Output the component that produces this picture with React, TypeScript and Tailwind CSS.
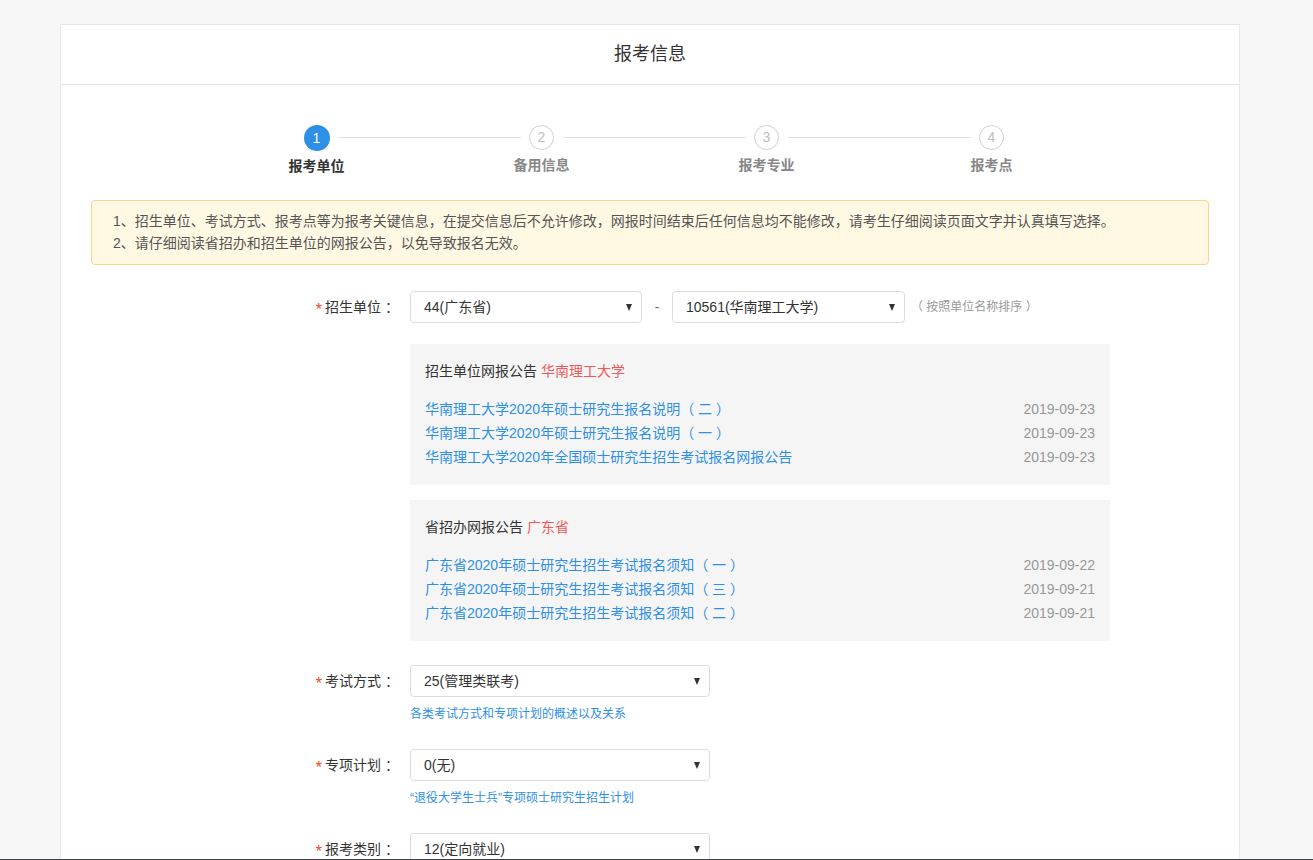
import React from "react";

const font = { fontFamily: '"Liberation Sans", "Noto Sans CJK SC", sans-serif' };

const steps = ["报考单位", "备用信息", "报考专业", "报考点"];

const unitNotices = [
  { title: "华南理工大学2020年硕士研究生报名说明（ 二 ）", date: "2019-09-23" },
  { title: "华南理工大学2020年硕士研究生报名说明（ 一 ）", date: "2019-09-23" },
  { title: "华南理工大学2020年全国硕士研究生招生考试报名网报公告", date: "2019-09-23" },
];

const provNotices = [
  { title: "广东省2020年硕士研究生招生考试报名须知（ 一 ）", date: "2019-09-22" },
  { title: "广东省2020年硕士研究生招生考试报名须知（ 三 ）", date: "2019-09-21" },
  { title: "广东省2020年硕士研究生招生考试报名须知（ 二 ）", date: "2019-09-21" },
];

// 仿下拉框（固定展示）
const FakeSelect = ({ value, width }: { value: string; width: string }) => (
  <div
    className={`${width} h-[32px] shrink-0 border border-[#dcdcdc] rounded-[4px] bg-white flex items-center justify-between pl-[13px] pr-[9px] text-[14px] text-[#333]`}
  >
    <span>{value}</span>
    <span className="w-0 h-0 border-l-[3.5px] border-r-[3.5px] border-t-[7px] border-l-transparent border-r-transparent border-t-[#333]"></span>
  </div>
);

const Label = ({ text }: { text: string }) => (
  <div className="w-[338px] shrink-0 flex justify-end items-center text-[14px] text-[#333]">
    <span className="text-[#f0502c] mr-[3px] text-[17px] leading-none pt-[5px]">*</span>
    <span>{text} ：</span>
  </div>
);

const NoticeBox = ({
  heading,
  name,
  items,
}: {
  heading: string;
  name: string;
  items: { title: string; date: string }[];
}) => (
  <div className="w-[700px] bg-[#f5f5f5] px-[15px] pt-[15px] pb-[16px] text-[14px]">
    <div className="h-[24px] leading-[24px] text-[#333]">
      {heading} <span className="text-[#f05a5a]">{name}</span>
    </div>
    <div className="mt-[14px]">
      {items.map((n) => (
        <div key={n.title} className="h-[24px] leading-[24px] flex justify-between">
          <span className="text-[#2d8fe8]">{n.title}</span>
          <span className="text-[#999]">{n.date}</span>
        </div>
      ))}
    </div>
  </div>
);

export default function App() {
  return (
    <div className="min-h-screen bg-[#f7f7f7] pt-[24px]" style={font}>
      <div className="ml-[60px] w-[1180px] bg-white border border-[#e8e8e8] pb-[40px]">
        {/* 标题 */}
        <div className="h-[60px] border-b border-[#e5e5e5] flex items-center justify-center text-[18px] text-[#333]">
          报考信息
        </div>

        {/* 步骤条 */}
        <div className="ml-[143px] mt-[40px] flex">
          {steps.map((s, i) => (
            <div key={s} className="relative w-[225px] flex flex-col items-center">
              {i < steps.length - 1 && (
                <div className="absolute top-[12px] left-[134px] w-[183px] h-px bg-[#e3e3e3]"></div>
              )}
              {i === 0 ? (
                <div className="w-[26px] h-[26px] rounded-full bg-[#2d8fe6] text-white text-[14px] flex items-center justify-center">
                  {i + 1}
                </div>
              ) : (
                <div className="w-[25px] h-[25px] rounded-full border border-[#d0d0d0] bg-white text-[#c0c0c0] text-[14px] flex items-center justify-center">
                  {i + 1}
                </div>
              )}
              <div
                className={`mt-[5px] h-[20px] leading-[20px] text-[14px] font-bold ${
                  i === 0 ? "text-[#333]" : "text-[#888]"
                }`}
              >
                {s}
              </div>
            </div>
          ))}
        </div>

        {/* 提示 */}
        <div className="mx-[30px] mt-[24px] border border-[#fcd58a] bg-[#fff8e3] rounded-[4px] pl-[21px] pt-[9px] pb-[10px] text-[14px] leading-[22px] text-[#555]">
          <p>
            1、招生单位、考试方式、报考点等为报考关键信息，在提交信息后不允许修改，网报时间结束后任何信息均不能修改，请考生仔细阅读页面文字并认真填写选择。
          </p>
          <p>2、请仔细阅读省招办和招生单位的网报公告，以免导致报名无效。</p>
        </div>

        {/* 招生单位 */}
        <div className="mt-[26px] flex items-center">
          <Label text="招生单位" />
          <div className="ml-[11px] flex items-center">
            <FakeSelect value="44(广东省)" width="w-[232px]" />
            <span className="w-[30px] text-center text-[#666] text-[14px]">-</span>
            <FakeSelect value="10561(华南理工大学)" width="w-[233px]" />
            <span className="ml-[6px] text-[12px] text-[#999]">（ 按照单位名称排序 ）</span>
          </div>
        </div>

        <div className="ml-[349px] mt-[21px] flex flex-col gap-[15px]">
          <NoticeBox heading="招生单位网报公告" name="华南理工大学" items={unitNotices} />
          <NoticeBox heading="省招办网报公告" name="广东省" items={provNotices} />
        </div>

        {/* 考试方式 */}
        <div className="mt-[24px] flex items-center">
          <Label text="考试方式" />
          <div className="ml-[11px]">
            <FakeSelect value="25(管理类联考)" width="w-[300px]" />
          </div>
        </div>
        <div className="ml-[349px] mt-[9px] h-[16px] leading-[16px] text-[12px] text-[#2d8fe8]">
          各类考试方式和专项计划的概述以及关系
        </div>

        {/* 专项计划 */}
        <div className="mt-[27px] flex items-center">
          <Label text="专项计划" />
          <div className="ml-[11px]">
            <FakeSelect value="0(无)" width="w-[300px]" />
          </div>
        </div>
        <div className="ml-[349px] mt-[9px] h-[16px] leading-[16px] text-[12px] text-[#2d8fe8]">
          “退役大学生士兵”专项硕士研究生招生计划
        </div>

        {/* 报考类别 */}
        <div className="mt-[27px] flex items-center">
          <Label text="报考类别" />
          <div className="ml-[11px]">
            <FakeSelect value="12(定向就业)" width="w-[300px]" />
          </div>
        </div>
      </div>
      <div className="fixed bottom-0 left-0 right-0 h-px bg-[#3c454b]"></div>
    </div>
  );
}
